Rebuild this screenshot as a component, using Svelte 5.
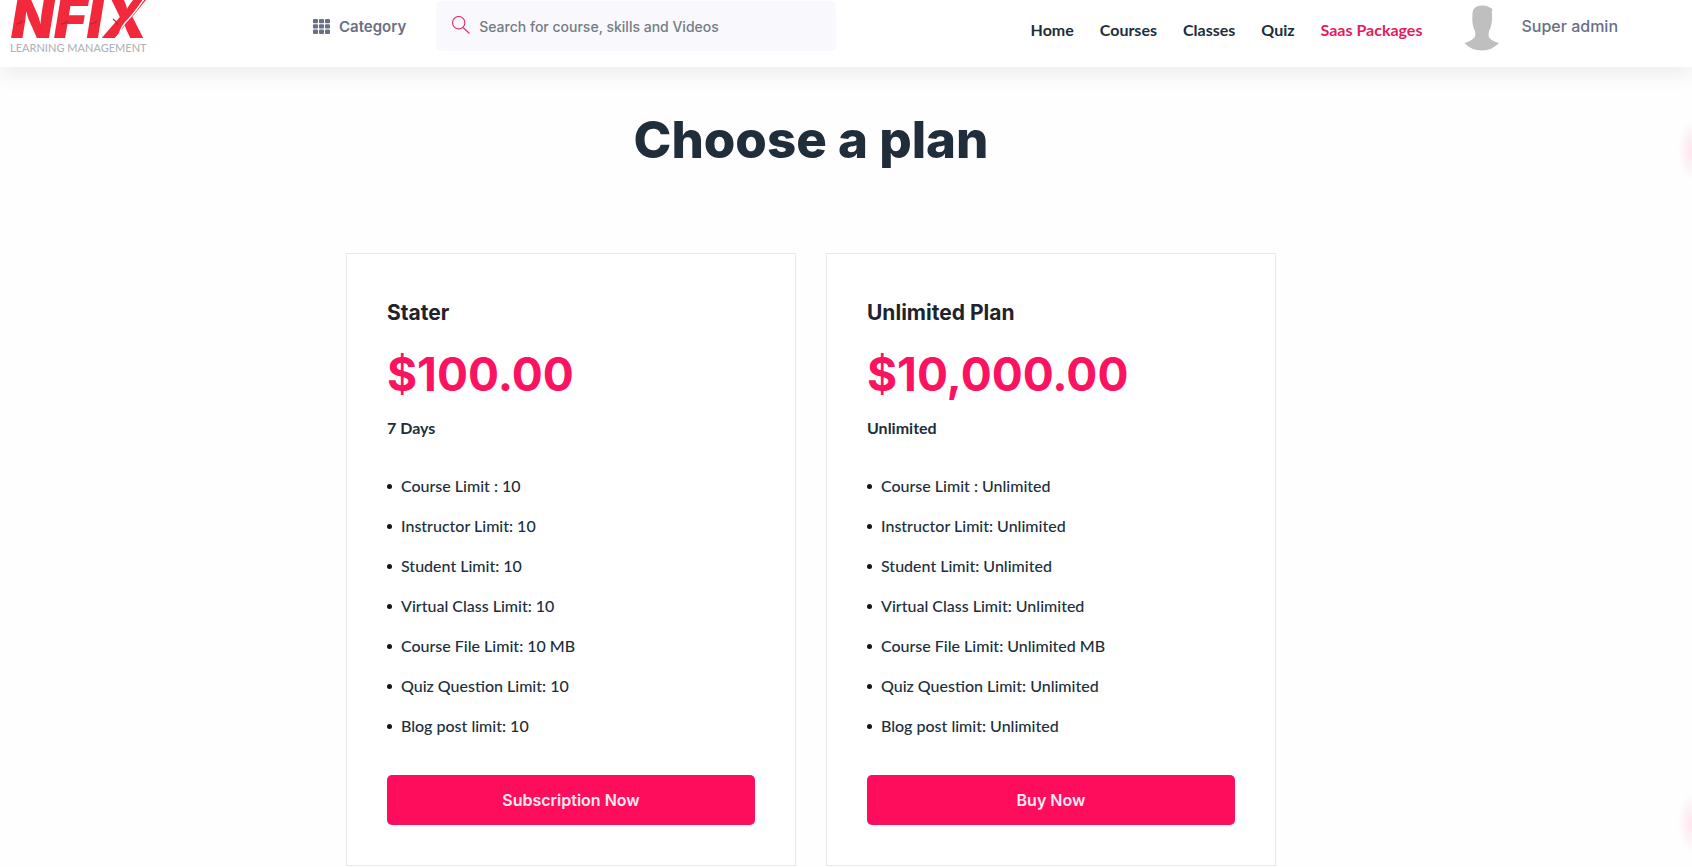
<script>
  const links = ['Home', 'Courses', 'Classes', 'Quiz', 'Saas Packages'];
  const active = 'Saas Packages';
  const labels = [
    'Course Limit :',
    'Instructor Limit:',
    'Student Limit:',
    'Virtual Class Limit:',
    'Course File Limit:',
    'Quiz Question Limit:',
    'Blog post limit:'
  ];
  const plans = [
    { name: 'Stater', price: '$100.00', period: '7 Days', limit: '10', action: 'Subscription Now' },
    { name: 'Unlimited Plan', price: '$10,000.00', period: 'Unlimited', limit: 'Unlimited', action: 'Buy Now' }
  ];
</script>

<header>
  <a class="logo" href="#home" aria-label="Infix Learning Management">
    <svg width="152" height="54" viewBox="0 0 152 54">
      <text class="brand" x="11" y="38">NFIX</text>
      <g fill="none" stroke="#b82431" stroke-width="1.2">
        <path d="M16 24q4 0 7-3M61 24q4 0 7-3M90 24q4 0 7-3M113 19q3 2 5 6" />
      </g>
      <path d="M119 39q0-9 6-16q9-9 19-24" fill="none" stroke="#fff" stroke-width="1.4" />
      <text class="tagline" x="10" y="52">LEARNING MANAGEMENT</text>
    </svg>
  </a>
  <button class="category" type="button">
    <svg width="17" height="15" viewBox="0 0 17 15" fill="#687083">
      {#each [0, 1, 2] as r}
        {#each [0, 1, 2] as c}
          <rect x={c * 6} y={r * 5.3} width="5" height="4.3" rx="1" />
        {/each}
      {/each}
    </svg>
    Category
  </button>
  <label class="search">
    <svg width="20" height="20" viewBox="0 0 20 20" fill="none" stroke="#e0336f" stroke-width="1.2">
      <circle cx="7.7" cy="6.700" r="6.200" />
      <path d="M12 11.500L18.500 17.500" />
    </svg>
    <input type="search" placeholder="Search for course, skills and Videos" aria-label="Search" />
  </label>
  <nav>
    {#each links as link}
      <a href="#{link}" class:active={link === active}>{link}</a>
    {/each}
  </nav>
  <a class="user" href="#profile">
    <svg width="36" height="50" viewBox="0 0 36 50" fill="#bfbfbf">
      <path transform="translate(0 4)" d="M8.500 8Q9 1 17 0.500Q23 0 25 2L28.500 4Q27.500 6 28 10Q28.500 20 25 26Q24 31 25.500 33Q28 36 35 38Q28 45.500 18 45.500Q7 45.500 0.500 38Q7 36 10 33Q12 31 11 26Q7.500 20 8.500 8Z" />
    </svg>
    <span>Super admin</span>
  </a>
</header>

<main>
  <h1>Choose a plan</h1>
  <div class="plans">
    {#each plans as plan}
      <section>
        <h2>{plan.name}</h2>
        <p class="price">{plan.price}</p>
        <p class="period">{plan.period}</p>
        <ul>
          {#each labels as label}
            <li>{label} {plan.limit}{label === 'Course File Limit:' ? ' MB' : ''}</li>
          {/each}
        </ul>
        <button type="button">{plan.action}</button>
      </section>
    {/each}
  </div>
</main>
<i class="glow upper"></i>
<i class="glow lower"></i>

<style>
  :global(body) {
    background: #fefefe;
    font-family: Inter, "Liberation Sans", sans-serif;
    color: #202e3b;
  }
  :global(*) {
    box-sizing: border-box;
  }
  a {
    text-decoration: none;
    color: inherit;
  }
  header {
    display: flex;
    align-items: center;
    padding: 0 74px 15px 0;
    background: #fff;
    box-shadow: 0 8px 20px rgba(0, 0, 0, 0.07);
  }
  .logo,
  .logo svg {
    display: block;
  }
  .logo {
    margin-right: 161px;
    height: 52px;
  }
  .brand {
    font: italic 900 56px Inter, sans-serif;
    fill: #f2293a;
  }
  .tagline {
    font: 500 11px Lato, sans-serif;
    fill: #b0b4b9;
  }
  .category {
    display: flex;
    align-items: center;
    gap: 9px;
    padding: 0;
    border: 0;
    background: none;
    color: #687083;
    font: 600 15px Inter, sans-serif;
  }
  .search {
    display: flex;
    align-items: center;
    gap: 6px;
    width: 400px;
    height: 50px;
    margin-left: 30px;
    padding: 0 15px;
    border-radius: 5px;
    background: #f8f8fd;
  }
  .search input {
    flex: 1;
    padding: 0 2px;
    border: 0;
    outline: 0;
    background: none;
    font: 500 14px Inter, sans-serif;
  }
  .search input::placeholder {
    color: #747c84;
    opacity: 1;
  }
  nav {
    display: flex;
    gap: 26px;
    margin-left: auto;
    padding-top: 6px;
    font: 700 16px Lato, sans-serif;
  }
  .active {
    color: #e5195f;
  }
  .user {
    display: flex;
    align-items: center;
    gap: 21px;
    margin-left: 42px;
    color: #687083;
    font-size: 16px;
    font-weight: 500;
  }
  main {
    padding-right: 70px;
  }
  h1 {
    margin: 0;
    padding: 39px 0 79px;
    text-align: center;
    font-size: 51px;
    line-height: 68px;
    font-weight: 800;
  }
  .plans {
    display: flex;
    justify-content: center;
    gap: 30px;
  }
  section {
    width: 450px;
    padding: 45px 40px 40px;
    border: 1px solid #e9e9ea;
    background: #fff;
  }
  h2 {
    margin: 0;
    font-size: 21px;
    line-height: 28px;
    font-weight: 700;
    color: #20242a;
  }
  .price {
    margin: 17px 0 12px;
    font-size: 46px;
    line-height: 60px;
    font-weight: 700;
    color: #fb1260;
  }
  .period {
    margin: 0 0 26px;
    font: 700 16px/24px Lato, sans-serif;
  }
  ul {
    margin: 0 0 29px;
    padding: 0;
    list-style: none;
  }
  li {
    display: flex;
    align-items: center;
    gap: 9px;
    font: 500 16px/40px Lato, sans-serif;
  }
  li::before {
    content: "";
    width: 5px;
    height: 5px;
    border-radius: 50%;
    background: #10151c;
  }
  section button {
    display: block;
    width: 100%;
    height: 50px;
    border: 0;
    border-radius: 5px;
    background: #ff0d5d;
    color: #ffe9f1;
    font: 600 16px Inter, sans-serif;
  }
  .glow {
    position: fixed;
    right: 0;
    width: 16px;
    height: 60px;
    background: radial-gradient(14px 30px at 100% 50%, #ffe4ec, transparent);
  }
  .upper {
    top: 120px;
  }
  .lower {
    bottom: 14px;
  }
</style>
